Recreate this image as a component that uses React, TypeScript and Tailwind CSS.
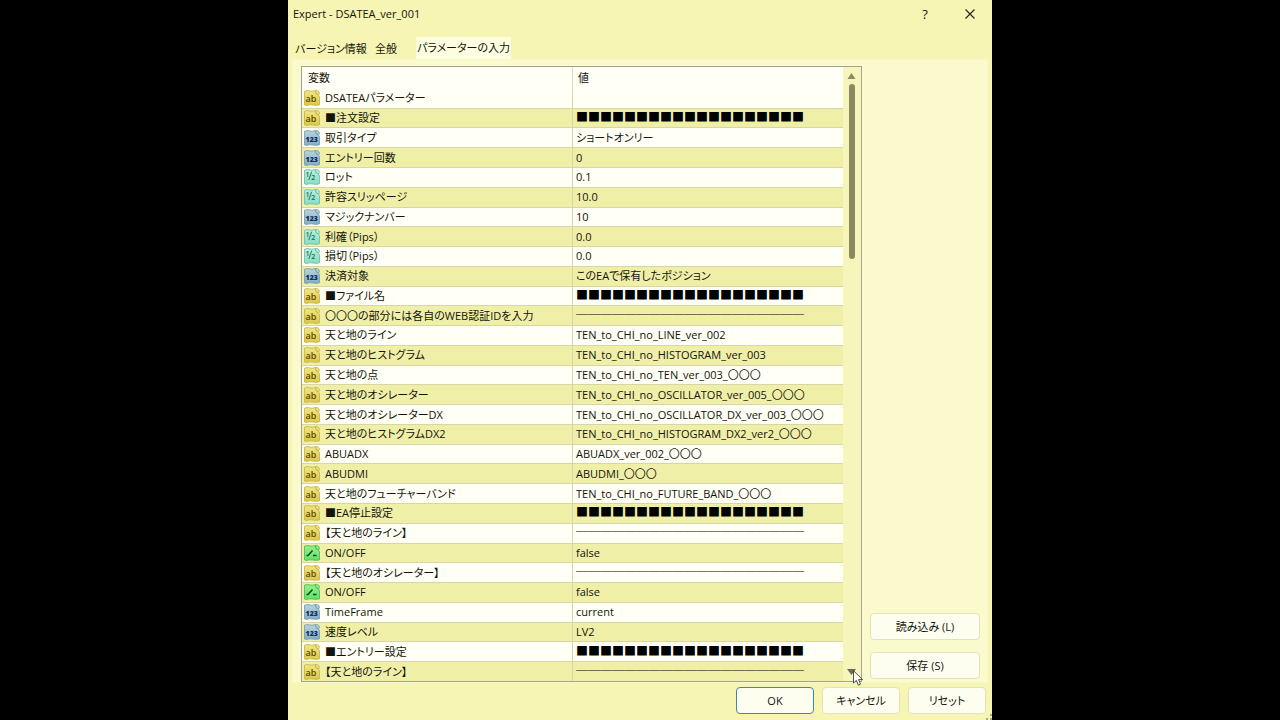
import type { ReactNode } from "react";

type Kind = "text" | "int" | "double" | "bool";
type Param = { kind: Kind; name: string; value: string };

const BLOCKS = "■■■■■■■■■■■■■■■■■■■";
const RULE = "───────────────────";

const params: Param[] = [
  { kind: "text", name: "DSATEAパラメーター", value: "" },
  { kind: "text", name: "■注文設定", value: BLOCKS },
  { kind: "int", name: "取引タイプ", value: "ショートオンリー" },
  { kind: "int", name: "エントリー回数", value: "0" },
  { kind: "double", name: "ロット", value: "0.1" },
  { kind: "double", name: "許容スリッページ", value: "10.0" },
  { kind: "int", name: "マジックナンバー", value: "10" },
  { kind: "double", name: "利確（Pips）", value: "0.0" },
  { kind: "double", name: "損切（Pips）", value: "0.0" },
  { kind: "int", name: "決済対象", value: "このEAで保有したポジション" },
  { kind: "text", name: "■ファイル名", value: BLOCKS },
  { kind: "text", name: "〇〇〇の部分には各自のWEB認証IDを入力", value: RULE },
  { kind: "text", name: "天と地のライン", value: "TEN_to_CHI_no_LINE_ver_002" },
  { kind: "text", name: "天と地のヒストグラム", value: "TEN_to_CHI_no_HISTOGRAM_ver_003" },
  { kind: "text", name: "天と地の点", value: "TEN_to_CHI_no_TEN_ver_003_〇〇〇" },
  { kind: "text", name: "天と地のオシレーター", value: "TEN_to_CHI_no_OSCILLATOR_ver_005_〇〇〇" },
  { kind: "text", name: "天と地のオシレーターDX", value: "TEN_to_CHI_no_OSCILLATOR_DX_ver_003_〇〇〇" },
  { kind: "text", name: "天と地のヒストグラムDX2", value: "TEN_to_CHI_no_HISTOGRAM_DX2_ver2_〇〇〇" },
  { kind: "text", name: "ABUADX", value: "ABUADX_ver_002_〇〇〇" },
  { kind: "text", name: "ABUDMI", value: "ABUDMI_〇〇〇" },
  { kind: "text", name: "天と地のフューチャーバンド", value: "TEN_to_CHI_no_FUTURE_BAND_〇〇〇" },
  { kind: "text", name: "■EA停止設定", value: BLOCKS },
  { kind: "text", name: "【天と地のライン】", value: RULE },
  { kind: "bool", name: "ON/OFF", value: "false" },
  { kind: "text", name: "【天と地のオシレーター】", value: RULE },
  { kind: "bool", name: "ON/OFF", value: "false" },
  { kind: "int", name: "TimeFrame", value: "current" },
  { kind: "int", name: "速度レベル", value: "LV2" },
  { kind: "text", name: "■エントリー設定", value: BLOCKS },
  { kind: "text", name: "【天と地のライン】", value: RULE },
];

const palette: Record<Kind, { top: string; bottom: string; edge: string; ink: string }> = {
  text: { top: "#f0e684", bottom: "#dcc848", edge: "#c4b048", ink: "#5c4a00" },
  int: { top: "#b8d4dc", bottom: "#84acc4", edge: "#7498ac", ink: "#0c2c5c" },
  double: { top: "#b8f0dc", bottom: "#88dcc4", edge: "#6cb8a4", ink: "#187058" },
  bool: { top: "#98f08c", bottom: "#60e068", edge: "#48b454", ink: "#084818" },
};

function KindIcon({ kind }: { kind: Kind }) {
  const c = palette[kind];
  const id = `fill-${kind}`;
  return (
    <svg width="16" height="16" viewBox="0 0 16 16" className="shrink-0" aria-hidden="true">
      <defs>
        <linearGradient id={id} x1="0" y1="0" x2="0" y2="1">
          <stop offset="0" stopColor={c.top} />
          <stop offset="1" stopColor={c.bottom} />
        </linearGradient>
      </defs>
      <path
        d="M0.5 1.2Q3 .2 5 .8Q8 1.8 11 .6Q14 0 15.2 2Q15.8 4 14.5 5L15.5 7V14.8Q12 15.8 9 15Q5 14.4 2.5 15.5L.5 15Z"
        fill={`url(#${id})`}
        stroke={c.edge}
        strokeWidth="0.8"
      />
      <path d="M11.5 1Q11 4 14.5 5" fill="none" stroke={c.edge} strokeWidth="1" />
      {kind === "text" && (
        <text x="7" y="11.5" textAnchor="middle" fontSize="9" fontWeight="600" fill={c.ink} fontFamily="Open Sans, sans-serif">ab</text>
      )}
      {kind === "int" && (
        <text x="7.7" y="11.8" textAnchor="middle" fontSize="7" fontWeight="800" fill={c.ink} fontFamily="Open Sans, sans-serif">123</text>
      )}
      {kind === "double" && (
        <g fill={c.ink} stroke="none" fontFamily="Open Sans, sans-serif" fontSize="7" fontWeight="600">
          <text x="1.6" y="8">1</text>
          <text x="7.2" y="11">2</text>
          <path d="M7.6 2.8L4.8 11" stroke={c.ink} strokeWidth="0.9" />
        </g>
      )}
      {kind === "bool" && (
        <path d="M2.5 10.5H4L8.5 5.5M9 10.5H12.5" fill="none" stroke={c.ink} strokeWidth="1.4" />
      )}
    </svg>
  );
}

function DialogButton({ children, primary = false }: { children: ReactNode; primary?: boolean }) {
  return (
    <button
      type="button"
      className={
        primary
          ? "h-[27px] w-full rounded border border-[#3c8c9c] bg-[#fefef0]"
          : "h-[27px] w-full rounded border border-[#e4e2b8] bg-[#fefef0]"
      }
    >
      {children}
    </button>
  );
}

export default function App() {
  return (
    <div className="flex min-h-screen justify-center bg-black font-['Open_Sans','Noto_Sans_CJK_JP',sans-serif] text-[11px] leading-4 text-[#14140c]">
      <main
        lang="ja"
        className="flex w-[55%] min-w-[640px] flex-col bg-[#f6f5b4] [font-feature-settings:'palt']"
      >
        <header className="flex h-7 items-center pl-[5px] pr-4">
          <h1 className="flex-1">Expert - DSATEA_ver_001</h1>
          <button type="button" aria-label="ヘルプ" className="mr-[33px] w-3 text-[13px]">?</button>
          <button type="button" aria-label="閉じる">
            <svg width="12" height="12" viewBox="0 0 12 12" aria-hidden="true">
              <path d="M1.5 1.5L10.5 10.5M10.5 1.5L1.5 10.5" stroke="#222218" strokeWidth="1.1" />
            </svg>
          </button>
        </header>

        <div role="tablist" className="mt-[9px] flex h-[22px] items-end whitespace-nowrap">
          <button type="button" role="tab" aria-selected="false" className="h-5 w-[82px] pl-1">バージョン情報</button>
          <button type="button" role="tab" aria-selected="false" className="h-5 w-8">全般</button>
          <button type="button" role="tab" aria-selected="true" className="ml-[14px] h-[22px] w-[95px] bg-[#fdfde0]">パラメーターの入力</button>
        </div>

        <div role="tabpanel" className="mx-1 flex flex-1 border border-[#f8f7cc] bg-[#fafacc] pt-[6px] pl-[8px]">
          <div className="flex min-w-0 flex-1 border border-[#a4a294] bg-[#fffff6]">
            <div className="min-w-0 flex-1">
              <table className="h-full w-full table-fixed border-collapse">
                <thead>
                  <tr className="h-[22px] text-left">
                    <th className="w-1/2 border-r border-[#e0dec0] py-0 pl-[6px] font-normal">変数</th>
                    <th className="w-1/2 py-0 pl-[5px] font-normal">値</th>
                  </tr>
                </thead>
                <tbody>
                  {params.map((p, i) => (
                    <tr key={i} className="border-b border-[#d8d6a4] last:border-b-0 even:bg-[#f0efa8]">
                      <td className="overflow-hidden border-r border-[#d8d6a4] p-0 pl-[2px]">
                        <div className="flex items-center gap-[5px] whitespace-nowrap">
                          <KindIcon kind={p.kind} />
                          <span>{p.name}</span>
                        </div>
                      </td>
                      <td className="overflow-hidden p-0 pl-[3px] whitespace-nowrap">
                        {p.value === BLOCKS || p.value === RULE ? (
                          <span className="text-xs text-black [font-feature-settings:normal]">{p.value}</span>
                        ) : (
                          p.value
                        )}
                      </td>
                    </tr>
                  ))}
                </tbody>
              </table>
            </div>

            <div className="relative flex w-[18px] flex-col items-center bg-[#f6f5bc] pt-[6px] pr-px pb-[6px]">
              <svg width="9" height="6" viewBox="0 0 9 6" aria-hidden="true">
                <path d="M4.5 0L8.5 6H.5Z" fill="#8c8a60" />
              </svg>
              <div className="mt-[5px] h-[175px] w-[6px] rounded-full bg-[#8c8a60]" />
              <svg width="9" height="6" viewBox="0 0 9 6" className="mt-auto" aria-hidden="true">
                <path d="M0 0H9L4.5 6Z" fill="#6c6a5c" />
              </svg>
              <svg width="11" height="17" viewBox="0 0 11 17" className="absolute -bottom-[6px] left-[10px]" aria-hidden="true">
                <path d="M.5 .8V13L3.4 10.4L5.3 15.2L7.5 14.2L5.6 9.6H9.6Z" fill="#fff" stroke="#3c3c34" strokeWidth="0.9" />
              </svg>
            </div>
          </div>

          <div className="flex w-[125px] flex-col justify-end gap-3 pr-[7px] pb-[3px] pl-2">
            <DialogButton>読み込み (L)</DialogButton>
            <DialogButton>保存 (S)</DialogButton>
          </div>
        </div>

        <footer className="relative flex h-[37px] items-center justify-end gap-2 pr-[6px] pb-[2px]">
          <div className="w-[78px]"><DialogButton primary>OK</DialogButton></div>
          <div className="w-[78px]"><DialogButton>キャンセル</DialogButton></div>
          <div className="w-[78px]"><DialogButton>リセット</DialogButton></div>
          <svg width="6" height="6" viewBox="0 0 6 6" className="absolute right-0 bottom-0" aria-hidden="true">
            <path d="M4 0h2v2H4zM0 4h2v2H0zM4 4h2v2H4z" fill="#a8a690" />
          </svg>
        </footer>
      </main>
    </div>
  );
}
